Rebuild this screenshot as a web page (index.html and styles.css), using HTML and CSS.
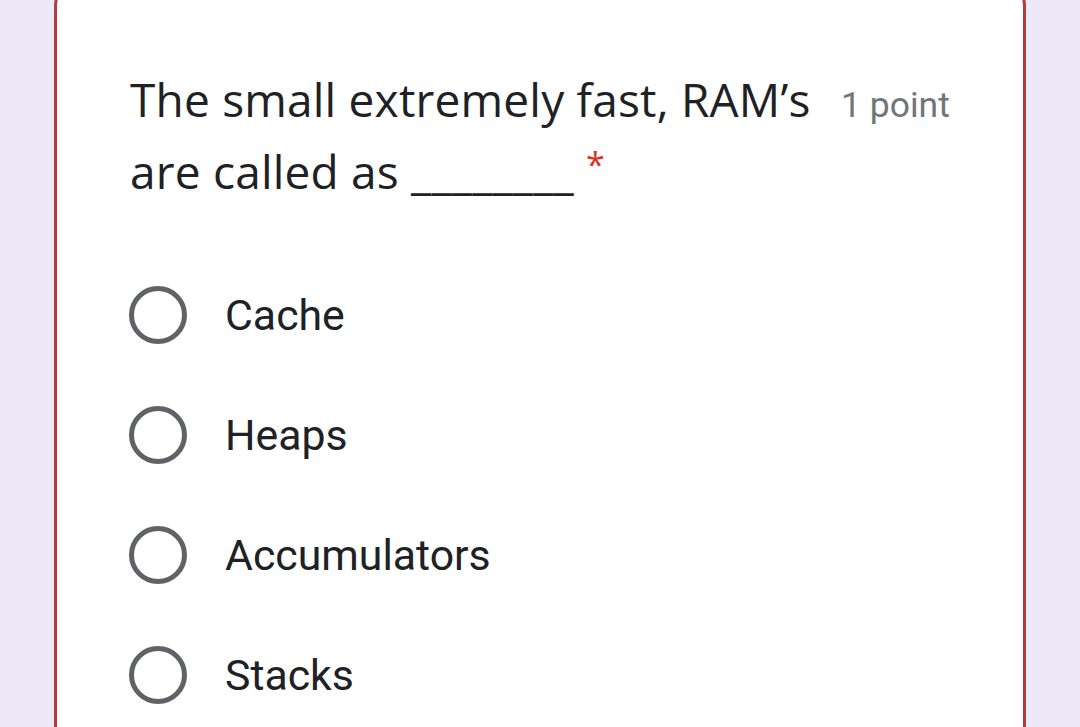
FILE: index.html
```html
<!DOCTYPE html>
<html>
<head>
<meta charset="utf-8">
<link rel="stylesheet" href="styles.css">
</head>
<body>
<div class="card">
  <div class="header">
    <div class="question">The small extremely fast, RAM’s are called as ________<span class="req">*</span></div>
    <div class="points">1 point</div>
  </div>
  <div class="options">
    <div class="option"><span class="radio"></span><span class="label">Cache</span></div>
    <div class="option"><span class="radio"></span><span class="label">Heaps</span></div>
    <div class="option"><span class="radio"></span><span class="label">Accumulators</span></div>
    <div class="option"><span class="radio"></span><span class="label">Stacks</span></div>
  </div>
</div>
</body>
</html>
```

FILE: styles.css
```css
html, body {
  margin: 0;
  padding: 0;
  background: #eee9f8;
  overflow: hidden;
}
body {
  width: 1080px;
  height: 727px;
}
.card {
  margin-left: 54px;
  margin-top: -20px;
  width: 966px;
  height: 800px;
  background: #ffffff;
  border: 3px solid #b33b3b;
  border-radius: 26px;
  box-sizing: content-box;
}
.header {
  display: flex;
  align-items: flex-start;
  padding: 80px 0 0 73px;
}
.question {
  width: 690px;
  flex: none;
  font-family: "Open Sans", sans-serif;
  font-size: 46px;
  line-height: 72px;
  color: #202124;
  letter-spacing: 0.2px;
}
.req {
  color: #d93025;
  font-size: 34px;
  line-height: 1;
  display: inline-block;
  vertical-align: top;
  margin-top: 12px;
  margin-left: 12px;
}
.points {
  margin-left: 21px;
  margin-top: 21px;
  font-family: "Roboto", sans-serif;
  font-size: 35.5px;
  color: #70757a;
  white-space: nowrap;
}
.options {
  display: flex;
  flex-direction: column;
  padding: 79px 0 0 72px;
  gap: 62px;
}
.option {
  display: flex;
  align-items: center;
  height: 58px;
}
.radio {
  width: 48px;
  height: 48px;
  border: 5px solid #5f6368;
  border-radius: 50%;
  flex: none;
}
.label {
  margin-left: 38px;
  font-family: "Roboto", sans-serif;
  font-size: 42.8px;
  color: #202124;
}
```
